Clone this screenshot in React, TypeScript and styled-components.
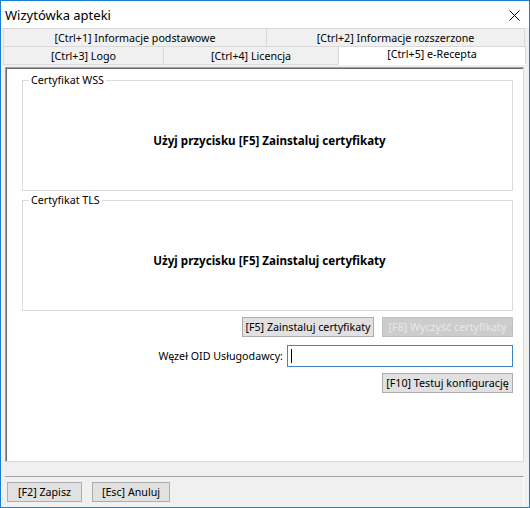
import React from "react";
import styled, { createGlobalStyle } from "styled-components";

const GlobalStyle = createGlobalStyle`
  html, body { margin: 0; padding: 0; background: #ffffff; }
  body { font-family: "Noto Sans", "Open Sans", sans-serif; }
  * { box-sizing: border-box; }
`;

const FONT = `"Noto Sans", "Open Sans", sans-serif`;

const Window = styled.div`
  width: 530px;
  height: 508px;
  border: 1px solid #1a7fd4;
  display: flex;
  flex-direction: column;
  background: #f0f0f0;
  font-family: ${FONT};
  font-size: 10.7px;
  color: #000;
`;

const TitleBar = styled.div`
  height: 27px;
  background: #ffffff;
  display: flex;
  align-items: center;
  justify-content: space-between;
  padding: 0 8px 0 4px;
`;

const Title = styled.span`
  font-size: 13px;
  color: #000;
  padding-top: 1px;
`;

const CloseButton = styled.div`
  width: 14px;
  height: 14px;
  display: flex;
  align-items: center;
  justify-content: center;
  margin-top: 1px;
`;

const TabStrip = styled.div`
  margin-left: 2px;
  display: flex;
  flex-direction: column;
`;

const TabRow = styled.div`
  display: flex;
  & + & { margin-top: -1px; }
`;

const Tab = styled.div<{ $w: number; $selected?: boolean }>`
  width: ${(p) => p.$w}px;
  height: 19px;
  display: flex;
  align-items: center;
  justify-content: center;
  background: ${(p) => (p.$selected ? "#ffffff" : "#f0f0f0")};
  border: 1px solid #d9d9d9;
  border-bottom-color: ${(p) => (p.$selected ? "#ffffff" : "#d9d9d9")};
  padding-bottom: ${(p) => (p.$selected ? 3 : 0)}px;
  white-space: nowrap;
  & + & { margin-left: -1px; }
`;

const Panel = styled.div`
  margin: 2px 0 0 4px;
  width: 519px;
  height: 395px;
  background: #ffffff;
  border: 1px solid;
  border-color: #a0a0a0 #dadada #dadada #a0a0a0;
  box-shadow: inset 1px 1px 0 #696969;
  padding: 5px 10px 0 16px;
  display: flex;
  flex-direction: column;
`;

const Group = styled.fieldset`
  margin: 0;
  padding: 0;
  height: 118px;
  border: 1px solid #dcdcdc;
  & + & { margin-top: 2px; }
`;

const Legend = styled.legend`
  margin-left: 6px;
  padding: 0 2px;
  font-size: 10.7px;
  line-height: 14px;
  color: #000;
`;

const GroupBody = styled.div`
  height: 103px;
  display: flex;
  align-items: center;
  justify-content: center;
  padding: 4px 0 0 4px;
`;

const Hint = styled.div`
  font-weight: bold;
  font-size: 11.6px;
`;

const ButtonRow = styled.div<{ $top: number }>`
  display: flex;
  justify-content: flex-end;
  gap: 8px;
  margin-top: ${(p) => p.$top}px;
`;

const Button = styled.button<{ $w: number }>`
  width: ${(p) => p.$w}px;
  height: 20px;
  padding: 0;
  font-family: ${FONT};
  font-size: 10.7px;
  color: #000;
  background: #e1e1e1;
  border: 1px solid #adadad;
  white-space: nowrap;
  &:disabled {
    background: #cccccc;
    border-color: #bfbfbf;
    color: #e8e8e8;
  }
`;

const FieldRow = styled.div`
  display: flex;
  justify-content: flex-end;
  align-items: center;
  gap: 4px;
  margin-top: 8px;
`;

const FieldLabel = styled.span`
  font-size: 10.7px;
`;

const TextBox = styled.div`
  width: 226px;
  height: 22px;
  border: 1px solid #3c86c8;
  background: #ffffff;
  display: flex;
  align-items: center;
  padding-left: 3px;
`;

const Caret = styled.span`
  width: 1px;
  height: 14px;
  background: #000;
`;

const Footer = styled.div`
  margin: 14px 0 0 4px;
  width: 519px;
  height: 31px;
  border-top: 1px solid #a0a0a0;
  border-right: 1px solid #fbfbfb;
  padding: 5px 0 0 2px;
  display: flex;
  gap: 10px;
`;

export default function App() {
  return (
    <>
      <GlobalStyle />
      <Window>
        <TitleBar>
          <Title>Wizytówka apteki</Title>
          <CloseButton>
            <svg width="11" height="11" viewBox="0 0 11 11">
              <path d="M0.5 0.5 L10.5 10.5 M10.5 0.5 L0.5 10.5" stroke="#000" strokeWidth="1" />
            </svg>
          </CloseButton>
        </TitleBar>
        <TabStrip>
          <TabRow>
            <Tab $w={264}>[Ctrl+1] Informacje podstawowe</Tab>
            <Tab $w={259}>[Ctrl+2] Informacje rozszerzone</Tab>
          </TabRow>
          <TabRow>
            <Tab $w={161}>[Ctrl+3] Logo</Tab>
            <Tab $w={176}>[Ctrl+4] Licencja</Tab>
            <Tab $w={188} $selected>[Ctrl+5] e-Recepta</Tab>
          </TabRow>
        </TabStrip>
        <Panel>
          <Group>
            <Legend>Certyfikat WSS</Legend>
            <GroupBody>
              <Hint>Użyj przycisku [F5] Zainstaluj certyfikaty</Hint>
            </GroupBody>
          </Group>
          <Group>
            <Legend>Certyfikat TLS</Legend>
            <GroupBody>
              <Hint>Użyj przycisku [F5] Zainstaluj certyfikaty</Hint>
            </GroupBody>
          </Group>
          <ButtonRow $top={6}>
            <Button $w={132}>[F5] Zainstaluj certyfikaty</Button>
            <Button $w={131} disabled>[F8] Wyczyść certyfikaty</Button>
          </ButtonRow>
          <FieldRow>
            <FieldLabel>Węzeł OID Usługodawcy:</FieldLabel>
            <TextBox>
              <Caret />
            </TextBox>
          </FieldRow>
          <ButtonRow $top={6}>
            <Button $w={131}>[F10] Testuj konfigurację</Button>
          </ButtonRow>
        </Panel>
        <Footer>
          <Button $w={75}>[F2] Zapisz</Button>
          <Button $w={78}>[Esc] Anuluj</Button>
        </Footer>
      </Window>
    </>
  );
}
